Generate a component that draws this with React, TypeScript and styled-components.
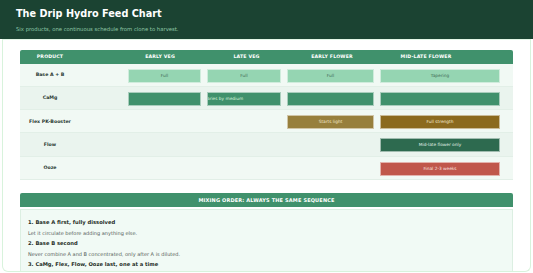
import styled, { createGlobalStyle } from 'styled-components';

const GlobalStyle = createGlobalStyle`
  html, body {
    margin: 0;
    padding: 0;
    background: #ffffff;
    font-family: 'DejaVu Sans', Verdana, sans-serif;
  }
`;

type Tone = 'full' | 'deep' | 'olive' | 'bronze' | 'forest' | 'red';

interface IBar {
  label?: string;
  tone: Tone;
  clipped?: boolean;
}

interface IRow {
  name: string;
  cells: (IBar | null)[];
}

const rows: IRow[] = [
  {
    name: 'Base A + B',
    cells: [
      { label: 'Full', tone: 'full' },
      { label: 'Full', tone: 'full' },
      { label: 'Full', tone: 'full' },
      { label: 'Tapering', tone: 'full' },
    ],
  },
  {
    name: 'CaMg',
    cells: [
      { tone: 'deep' },
      { label: 'Varies by medium', tone: 'deep', clipped: true },
      { tone: 'deep' },
      { tone: 'deep' },
    ],
  },
  {
    name: 'Flex PK-Booster',
    cells: [null, null, { label: 'Starts light', tone: 'olive' }, { label: 'Full strength', tone: 'bronze' }],
  },
  {
    name: 'Flow',
    cells: [null, null, null, { label: 'Mid-late flower only', tone: 'forest' }],
  },
  {
    name: 'Ooze',
    cells: [null, null, null, { label: 'Final 2-3 weeks', tone: 'red' }],
  },
];

const steps = [
  { title: '1. Base A first, fully dissolved', text: 'Let it circulate before adding anything else.' },
  { title: '2. Base B second', text: 'Never combine A and B concentrated, only after A is diluted.' },
  { title: '3. CaMg, Flex, Flow, Ooze last, one at a time' },
];

const toneColors: Record<Tone, { bg: string; fg: string }> = {
  full: { bg: '#95d5b2', fg: '#3f6b55' },
  deep: { bg: '#40916c', fg: '#d8f3dc' },
  olive: { bg: '#977f3c', fg: '#f3e9cc' },
  bronze: { bg: '#8b6a1e', fg: '#f5ecd0' },
  forest: { bg: '#2d6a4f', fg: '#e3f4ea' },
  red: { bg: '#c0574b', fg: '#fbe6e2' },
};

const App = () => {
  return (
    <>
      <GlobalStyle />
      <Header>
        <Title>The Drip Hydro Feed Chart</Title>
        <Subtitle>Six products, one continuous schedule from clone to harvest.</Subtitle>
      </Header>
      <Card>
        <Table>
          <HeadRow>
            <HeadCell $pad={37}>Product</HeadCell>
            <HeadCell>Early Veg</HeadCell>
            <HeadCell>Late Veg</HeadCell>
            <HeadCell>Early Flower</HeadCell>
            <HeadCell>Mid-Late Flower</HeadCell>
            <HeadCell />
          </HeadRow>
          {rows.map((row, i) => (
            <Row key={row.name} $alt={i % 2 === 1}>
              <NameCell>
                <Name>{row.name}</Name>
              </NameCell>
              {row.cells.map((cell, j) => (
                <Cell key={j}>
                  {cell && (
                    <Bar $tone={cell.tone} $clipped={cell.clipped}>
                      {cell.label}
                    </Bar>
                  )}
                </Cell>
              ))}
              <Cell />
            </Row>
          ))}
        </Table>

        <MixHeader>Mixing order: always the same sequence</MixHeader>
        <MixBox>
          {steps.map((step) => (
            <Step key={step.title}>
              <StepTitle>{step.title}</StepTitle>
              {step.text && <StepText>{step.text}</StepText>}
            </Step>
          ))}
        </MixBox>
      </Card>
    </>
  );
};

const Header = styled.header`
  background: #1b4332;
  height: 39px;
  box-sizing: border-box;
  padding: 8px 16px 0;
`;

const Title = styled.h1`
  margin: 0 0 5.5px;
  font-size: 9.7px;
  line-height: 12px;
  font-weight: 700;
  color: #ffffff;
`;

const Subtitle = styled.p`
  margin: 0;
  font-size: 5.3px;
  line-height: 7px;
  color: #8fc9a8;
`;

const Card = styled.main`
  margin: 0 2px;
  height: 233px;
  box-sizing: border-box;
  border: 1px solid #d8f3dc;
  border-top-color: #e3f6e7;
  border-radius: 0 0 6px 6px;
  background: #ffffff;
  padding: 10px 17px;
  overflow: hidden;
`;

const Table = styled.div`
  display: flex;
  flex-direction: column;
`;

const HeadRow = styled.div`
  display: grid;
  grid-template-columns: 97px 86px 87px 84px 104px 1fr;
  height: 13.5px;
  align-items: center;
  background: #40916c;
  border-radius: 2px 2px 0 0;
`;

const HeadCell = styled.div<{ $pad?: number }>`
  padding-right: ${(p) => p.$pad ?? 0}px;
  text-align: center;
  font-size: 4.7px;
  font-weight: 700;
  letter-spacing: 0.15px;
  text-transform: uppercase;
  color: #ffffff;
`;

const Row = styled.div<{ $alt: boolean }>`
  display: grid;
  grid-template-columns: 105px 79px 80px 93px 126px 1fr;
  background: ${(p) => (p.$alt ? '#eaf4ee' : '#f1f9f4')};
  border-bottom: 1px solid #e2efe7;
`;

const NameCell = styled.div`
  display: flex;
  align-items: center;
`;

const Name = styled.span`
  width: 60px;
  text-align: center;
  font-size: 4.7px;
  font-weight: 700;
  color: #2b3a33;
`;

const Cell = styled.div`
  padding: 5px 3px 3.3px;
`;

const Bar = styled.div<{ $tone: Tone; $clipped?: boolean }>`
  height: 14px;
  box-sizing: border-box;
  border: 1px solid rgba(255, 255, 255, 0.55);
  background: ${(p) => toneColors[p.$tone].bg};
  color: ${(p) => toneColors[p.$tone].fg};
  font-size: 4.3px;
  line-height: 12px;
  text-align: ${(p) => (p.$clipped ? 'left' : 'center')};
  text-indent: ${(p) => (p.$clipped ? '-3.6px' : '0')};
  white-space: nowrap;
  overflow: hidden;
`;

const MixHeader = styled.div`
  margin-top: 13px;
  height: 14px;
  line-height: 14px;
  background: #40916c;
  border-radius: 2px 2px 0 0;
  text-align: center;
  font-size: 5px;
  font-weight: 700;
  letter-spacing: 0.15px;
  text-transform: uppercase;
  color: #ffffff;
`;

const MixBox = styled.div`
  margin-top: 2px;
  border: 1px solid #dcefe2;
  background: #f1faf5;
  padding: 7.5px 7px 10px;
  display: flex;
  flex-direction: column;
`;

const Step = styled.div`
  display: flex;
  flex-direction: column;
`;

const StepTitle = styled.div`
  font-size: 5.2px;
  line-height: 10.5px;
  font-weight: 700;
  color: #1f2d26;
`;

const StepText = styled.div`
  font-size: 5px;
  line-height: 10.2px;
  color: #555d59;
`;

export default App;
